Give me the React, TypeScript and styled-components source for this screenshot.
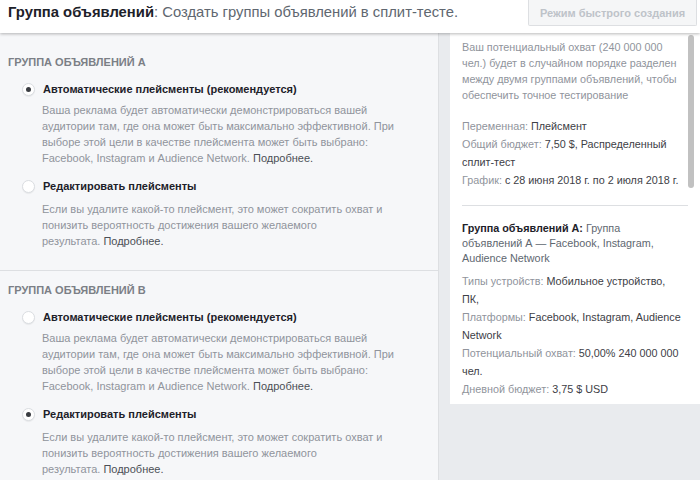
import styled, { createGlobalStyle } from 'styled-components'

const GlobalStyle = createGlobalStyle`
    html, body {
        margin: 0;
        padding: 0;
        overflow: hidden;
    }
    body {
        font-family: "Liberation Sans", Arial, sans-serif;
        background: #fff;
    }
`

const Page = styled.div`
    width: 700px;
    height: 480px;
    display: flex;
    flex-direction: column;
    overflow: hidden;
`

const Header = styled.header`
    position: relative;
    z-index: 2;
    flex: none;
    height: 33px;
    background: #fff;
    display: flex;
    align-items: flex-start;
    justify-content: space-between;
    box-shadow: 0 1px 3px rgba(0, 0, 0, 0.28);
`

const Title = styled.h1`
    margin: 3px 0 0 8px;
    font-size: 14.8px;
    line-height: 18px;
    font-weight: normal;
    color: #606770;

    b {
        color: #1d2129;
        font-weight: bold;
    }
`

const QuickButton = styled.button`
    width: 169px;
    height: 26px;
    margin-right: 3px;
    padding: 0 8px;
    border: 1px solid #dddfe2;
    border-top: none;
    border-radius: 0 0 2px 2px;
    background: #f5f6f7;
    color: #bec3c9;
    font: bold 11px "Liberation Sans", Arial, sans-serif;
    white-space: nowrap;
`

const Body = styled.div`
    flex: 1;
    min-height: 0;
    display: flex;
`

const Left = styled.div`
    flex: none;
    width: 438px;
    padding-top: 10px;
    background: #f6f7f9;
    border-right: 1px solid #dddfe2;
`

const Section = styled.section<{ $divider?: boolean }>`
    padding: 11px 0 21px;
    border-bottom: ${(p) => (p.$divider ? '1px solid #dddfe2' : 'none')};
`

const SectionTitle = styled.h2`
    margin: 0 0 11px 8px;
    font-size: 11px;
    line-height: 16px;
    font-weight: bold;
    color: #7b7f86;
    text-transform: uppercase;
`

const Options = styled.div`
    display: flex;
    flex-direction: column;
    gap: 12px;
`

const OptionRow = styled.label`
    display: flex;
    align-items: center;
    gap: 8px;
    padding-left: 22px;
    height: 16px;
`

const Radio = styled.span<{ $checked?: boolean }>`
    box-sizing: border-box;
    width: 13px;
    height: 13px;
    border-radius: 50%;
    background: #fff;
    border: 1px solid #dadde1;
    box-shadow: 0 1px 1px rgba(0, 0, 0, 0.06);
    display: flex;
    align-items: center;
    justify-content: center;

    &::after {
        content: '';
        width: 5px;
        height: 5px;
        border-radius: 50%;
        background: ${(p) => (p.$checked ? '#3a3d42' : 'transparent')};
    }
`

const OptionLabel = styled.span`
    font-size: 11px;
    line-height: 16px;
    font-weight: bold;
    color: #1d2129;
`

const Desc = styled.p<{ $gap: number }>`
    margin: ${(p) => p.$gap}px 0 0 42px;
    font-size: 11px;
    line-height: 16px;
    color: #90949c;
    white-space: nowrap;
`

const More = styled.span`
    color: #4b4f56;
`

const Right = styled.div`
    position: relative;
    flex: 1;
    padding-left: 11px;
    background: #e9ebee;
`

const Card = styled.div`
    width: 250px;
    box-sizing: border-box;
    padding: 6px 12px 6px;
    background: #fff;
    font-size: 10.8px;
    color: #90949c;
    white-space: nowrap;
`

const Intro = styled.p`
    margin: 0;
    line-height: 16px;
`

const Facts = styled.div<{ $gap: number }>`
    margin-top: ${(p) => p.$gap}px;
    line-height: 18px;
`

const Value = styled.span`
    color: #3d4046;
`

const Divider = styled.hr`
    margin: 16px 0 15px;
    border: none;
    border-top: 1px solid #dddfe2;
`

const GroupName = styled.p`
    margin: 0;
    line-height: 15px;
    color: #606770;

    b {
        color: #1d2129;
    }
`

const Scrollbar = styled.div`
    position: absolute;
    top: 2px;
    right: 6px;
    width: 6px;
    height: 153px;
    border-radius: 3px;
    background: #c1c1c1;
`

type Placement = {
    checked: boolean
    label: string
    gap: number
    lines: string[]
}

function PlacementOptions({ autoChecked }: { autoChecked: boolean }) {
    const options: Placement[] = [
        {
            checked: autoChecked,
            label: 'Автоматические плейсменты (рекомендуется)',
            gap: 5,
            lines: [
                'Ваша реклама будет автоматически демонстрироваться вашей',
                'аудитории там, где она может быть максимально эффективной. При',
                'выборе этой цели в качестве плейсмента может быть выбрано:',
                'Facebook, Instagram и Audience Network.',
            ],
        },
        {
            checked: !autoChecked,
            label: 'Редактировать плейсменты',
            gap: 7,
            lines: [
                'Если вы удалите какой-то плейсмент, это может сократить охват и',
                'понизить вероятность достижения вашего желаемого',
                'результата.',
            ],
        },
    ]

    return (
        <Options>
            {options.map((o) => (
                <div key={o.label}>
                    <OptionRow>
                        <Radio $checked={o.checked} />
                        <OptionLabel>{o.label}</OptionLabel>
                    </OptionRow>
                    <Desc $gap={o.gap}>
                        {o.lines.map((line, i) => (
                            <span key={i}>
                                {line}
                                {i === o.lines.length - 1 ? (
                                    <> <More>Подробнее.</More></>
                                ) : (
                                    <br />
                                )}
                            </span>
                        ))}
                    </Desc>
                </div>
            ))}
        </Options>
    )
}

export default function App() {
    return (
        <Page>
            <GlobalStyle />
            <Header>
                <Title>
                    <b>Группа объявлений</b>: Создать группы объявлений в сплит-тесте.
                </Title>
                <QuickButton>Режим быстрого создания</QuickButton>
            </Header>
            <Body>
                <Left>
                    <Section $divider>
                        <SectionTitle>Группа объявлений А</SectionTitle>
                        <PlacementOptions autoChecked />
                    </Section>
                    <Section>
                        <SectionTitle>Группа объявлений В</SectionTitle>
                        <PlacementOptions autoChecked={false} />
                    </Section>
                </Left>
                <Right>
                    <Card>
                        <Intro>
                            Ваш потенциальный охват (240 000 000<br />
                            чел.) будет в случайном порядке разделен<br />
                            между двумя группами объявлений, чтобы<br />
                            обеспечить точное тестирование
                        </Intro>
                        <Facts $gap={14}>
                            Переменная: <Value>Плейсмент</Value>
                            <br />
                            Общий бюджет: <Value>7,50 $, Распределенный</Value>
                            <br />
                            <Value>сплит-тест</Value>
                            <br />
                            График: <Value>с 28 июня 2018 г. по 2 июля 2018 г.</Value>
                        </Facts>
                        <Divider />
                        <GroupName>
                            <b>Группа объявлений А:</b> Группа
                            <br />
                            объявлений А — Facebook, Instagram,
                            <br />
                            Audience Network
                        </GroupName>
                        <Facts $gap={6}>
                            Типы устройств: <Value>Мобильное устройство,</Value>
                            <br />
                            <Value>ПК,</Value>
                            <br />
                            Платформы: <Value>Facebook, Instagram, Audience</Value>
                            <br />
                            <Value>Network</Value>
                            <br />
                            Потенциальный охват: <Value>50,00% 240 000 000</Value>
                            <br />
                            <Value>чел.</Value>
                            <br />
                            Дневной бюджет: <Value>3,75 $ USD</Value>
                        </Facts>
                    </Card>
                    <Scrollbar />
                </Right>
            </Body>
        </Page>
    )
}
